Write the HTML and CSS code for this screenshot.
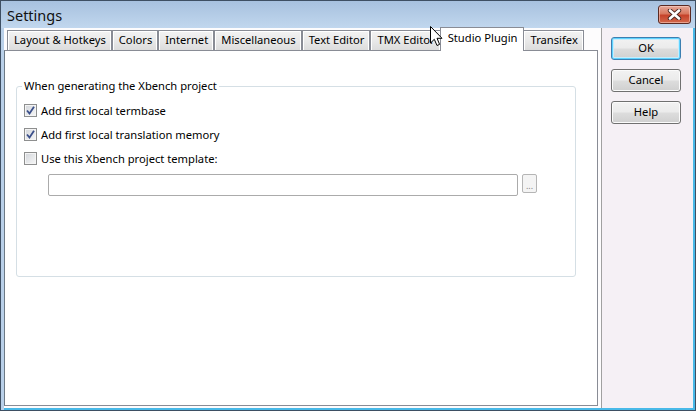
FILE: index.html
```html
<!DOCTYPE html>
<html>
<head>
<meta charset="utf-8">
<link rel="stylesheet" href="styles.css">
</head>
<body>
<div class="window">
  <div class="titlebar">
    <span class="title">Settings</span>
    <div class="close">
      <svg width="17" height="11" viewBox="0 0 17 11">
        <path d="M4 1.5 L13 9.5 M13 1.5 L4 9.5" stroke="#4a2620" stroke-width="4.4" stroke-linecap="round"/>
        <path d="M4 1.5 L13 9.5 M13 1.5 L4 9.5" stroke="#ffffff" stroke-width="2.6" stroke-linecap="round"/>
      </svg>
    </div>
  </div>
  <div class="client">
    <div class="main">
      <div class="tabs">
        <div class="tab">Layout &amp; Hotkeys</div>
        <div class="tab">Colors</div>
        <div class="tab">Internet</div>
        <div class="tab">Miscellaneous</div>
        <div class="tab">Text Editor</div>
        <div class="tab">TMX Editor</div>
        <div class="tab active">Studio Plugin</div>
        <div class="tab">Transifex</div>
      </div>
      <div class="panel">
        <fieldset class="group">
          <legend class="legend">When generating the Xbench project</legend>
          <div class="check">
            <span class="box">
              <svg width="9" height="9" viewBox="0 0 9 9"><path d="M1 4.5 L3.5 7.5 L8 0.8" fill="none" stroke="#3b4f8a" stroke-width="1.8"/></svg>
            </span>
            <span>Add first local termbase</span>
          </div>
          <div class="check">
            <span class="box">
              <svg width="9" height="9" viewBox="0 0 9 9"><path d="M1 4.5 L3.5 7.5 L8 0.8" fill="none" stroke="#3b4f8a" stroke-width="1.8"/></svg>
            </span>
            <span>Add first local translation memory</span>
          </div>
          <div class="check">
            <span class="box"></span>
            <span>Use this Xbench project template:</span>
          </div>
          <div class="pathrow">
            <div class="textbox"></div>
            <div class="browse">...</div>
          </div>
        </fieldset>
      </div>
    </div>
    <div class="side">
      <div class="btn default">OK</div>
      <div class="btn">Cancel</div>
      <div class="btn">Help</div>
    </div>
  </div>
  <svg class="cursor" width="13" height="21" viewBox="0 0 13 21">
    <path d="M0.5 0.5 L0.5 17 L4.3 13.3 L7 19.5 L9.6 18.4 L7 12.3 L12 12.3 Z" fill="#ffffff" stroke="#000000" stroke-width="1"/>
  </svg>
</div>
</body>
</html>
```
FILE: styles.css
```css
* { box-sizing: border-box; }
html, body { margin: 0; padding: 0; }
body {
  width: 696px;
  height: 411px;
  overflow: hidden;
  font-family: "Noto Sans", "Open Sans", sans-serif;
  font-size: 11.2px;
  color: #000;
}
.window {
  position: relative;
  width: 696px;
  height: 411px;
  border: 1px solid #3e4f63;
  background: #b9d0e9;
  display: flex;
  flex-direction: column;
}
.titlebar {
  height: 27px;
  flex: none;
  display: flex;
  align-items: flex-start;
  justify-content: space-between;
  background: linear-gradient(#a7c1df, #b4cce6 50%, #c1d7ee);
  padding: 0 4px 0 6px;
}
.title {
  font-size: 14.5px;
  line-height: 15px;
  margin-top: 7px;
  color: #111;
}
.close {
  width: 33px;
  height: 19px;
  margin-top: 4px;
  border: 1px solid #5b2a22;
  border-radius: 3px;
  background: linear-gradient(#e6a899, #d8785f 45%, #c6422a 55%, #d2694c);
  box-shadow: inset 0 0 0 1px rgba(255, 220, 210, 0.5);
  display: flex;
  align-items: center;
  justify-content: center;
}
.client {
  flex: 1;
  display: flex;
  margin: 0 2px 0 3px;
  border-bottom: 2px solid #48b9e8;
  box-shadow: 2px 0 0 #48b9e8;
}
.main {
  width: 597px;
  flex: none;
  background: #fdfcfd;
  display: flex;
  flex-direction: column;
  padding: 0 3px 2px 0;
}
.tabs {
  height: 22px;
  flex: none;
  display: flex;
  align-items: flex-end;
  padding-left: 3px;
  position: relative;
  z-index: 1;
}
.tab {
  height: 20px;
  border: 1px solid #898c95;
  border-bottom: none;
  background: linear-gradient(#f3f3f3, #e9e9e9 50%, #dcdcdc);
  box-shadow: inset 1px 1px 0 #fff, inset -1px 0 0 #fff;
  padding: 0 5px 0 6px;
  line-height: 18px;
  white-space: nowrap;
}
.tab.active {
  height: 24px;
  margin: 0 -1px -1px -1px;
  padding: 0 6px 0 7px;
  background: #fff;
  box-shadow: none;
  line-height: 19px;
  position: relative;
}
.panel {
  flex: 1;
  border: 1px solid #898c95;
  border-left-color: #6d7a86;
  background: #fff;
  padding: 27px 21px 0 11px;
}
.group {
  margin: 0;
  height: 199px;
  border: 1px solid #d5dfe5;
  border-radius: 3px;
  padding: 0 0 0 7px;
}
.legend {
  padding: 0 2px;
  margin-left: -2px;
  line-height: 16px;
}
.check {
  display: flex;
  align-items: center;
  height: 24px;
  gap: 4px;
}
.check:first-of-type { margin-top: 4px; }
.box {
  width: 13px;
  height: 13px;
  flex: none;
  border: 1px solid #8e8f8f;
  background: linear-gradient(135deg, #d2d5da, #f7f7f7);
  box-shadow: inset 0 0 0 1px #f4f4f4;
  display: flex;
  align-items: center;
  justify-content: center;
}
.pathrow {
  display: flex;
  align-items: flex-start;
  gap: 4px;
  margin: 4px 0 0 24px;
}
.textbox {
  width: 470px;
  height: 22px;
  border: 1px solid #ababab;
  border-radius: 2px;
  background: #fff;
}
.browse {
  width: 15px;
  height: 19px;
  border: 1px solid #b5b5b5;
  border-radius: 2px;
  background: #f4f4f4;
  color: #888;
  font-size: 9px;
  line-height: 22px;
  text-align: center;
  overflow: hidden;
}
.side {
  flex: 1;
  border-left: 1px solid #a0a0a0;
  background: #f5f0f5;
  padding: 9px 0 0 9px;
  display: flex;
  flex-direction: column;
  gap: 9px;
}
.btn {
  width: 70px;
  height: 23px;
  border: 1px solid #707070;
  border-radius: 3px;
  background: linear-gradient(#f2f2f2, #ebebeb 48%, #dddddd 52%, #cfcfcf);
  box-shadow: inset 0 0 0 1px #fbfbfb;
  text-align: center;
  line-height: 20px;
}
.btn.default {
  border-color: #3c7fb1;
  box-shadow: inset 0 0 0 1px #5fd3ff, inset 0 0 0 2px #c8ecfb;
}
.cursor {
  position: absolute;
  left: 429px;
  top: 25px;
  z-index: 5;
}
```
